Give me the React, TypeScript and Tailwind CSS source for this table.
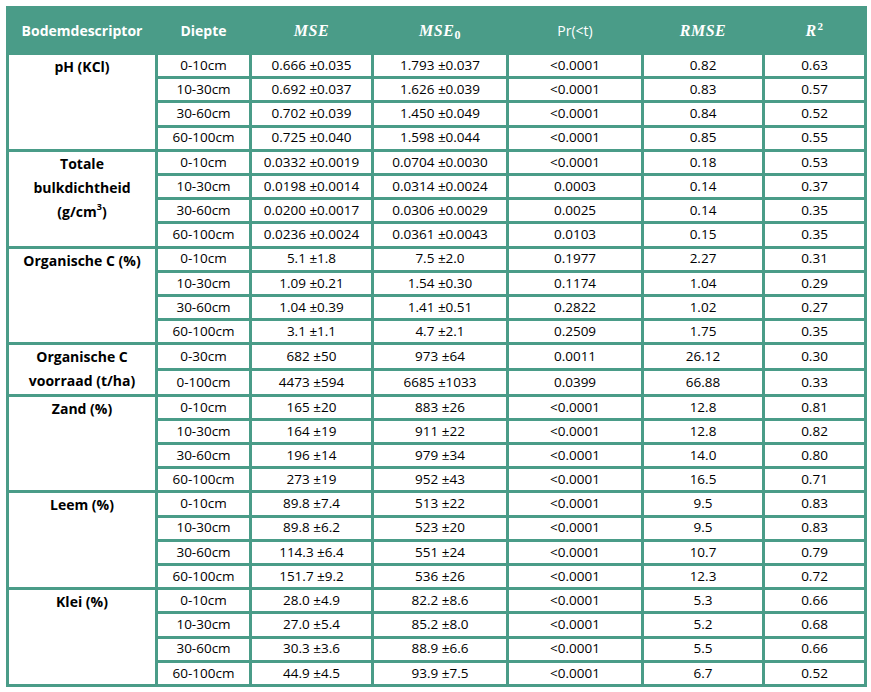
import React from "react";

type Row = [string, string, string, string, string, string];
type Group = { label: React.ReactNode; rows: Row[] };

const groups: Group[] = [
  {
    label: "pH (KCl)",
    rows: [
      ["0-10cm", "0.666 ±0.035", "1.793 ±0.037", "<0.0001", "0.82", "0.63"],
      ["10-30cm", "0.692 ±0.037", "1.626 ±0.039", "<0.0001", "0.83", "0.57"],
      ["30-60cm", "0.702 ±0.039", "1.450 ±0.049", "<0.0001", "0.84", "0.52"],
      ["60-100cm", "0.725 ±0.040", "1.598 ±0.044", "<0.0001", "0.85", "0.55"],
    ],
  },
  {
    label: (
      <>
        Totale
        <br />
        bulkdichtheid
        <br />
        (g/cm<span className="text-[9px] align-top relative top-[-5px]">3</span>)
      </>
    ),
    rows: [
      ["0-10cm", "0.0332 ±0.0019", "0.0704 ±0.0030", "<0.0001", "0.18", "0.53"],
      ["10-30cm", "0.0198 ±0.0014", "0.0314 ±0.0024", "0.0003", "0.14", "0.37"],
      ["30-60cm", "0.0200 ±0.0017", "0.0306 ±0.0029", "0.0025", "0.14", "0.35"],
      ["60-100cm", "0.0236 ±0.0024", "0.0361 ±0.0043", "0.0103", "0.15", "0.35"],
    ],
  },
  {
    label: "Organische C (%)",
    rows: [
      ["0-10cm", "5.1 ±1.8", "7.5 ±2.0", "0.1977", "2.27", "0.31"],
      ["10-30cm", "1.09 ±0.21", "1.54 ±0.30", "0.1174", "1.04", "0.29"],
      ["30-60cm", "1.04 ±0.39", "1.41 ±0.51", "0.2822", "1.02", "0.27"],
      ["60-100cm", "3.1 ±1.1", "4.7 ±2.1", "0.2509", "1.75", "0.35"],
    ],
  },
  {
    label: (
      <>
        Organische C
        <br />
        voorraad (t/ha)
      </>
    ),
    rows: [
      ["0-30cm", "682 ±50", "973 ±64", "0.0011", "26.12", "0.30"],
      ["0-100cm", "4473 ±594", "6685 ±1033", "0.0399", "66.88", "0.33"],
    ],
  },
  {
    label: "Zand (%)",
    rows: [
      ["0-10cm", "165 ±20", "883 ±26", "<0.0001", "12.8", "0.81"],
      ["10-30cm", "164 ±19", "911 ±22", "<0.0001", "12.8", "0.82"],
      ["30-60cm", "196 ±14", "979 ±34", "<0.0001", "14.0", "0.80"],
      ["60-100cm", "273 ±19", "952 ±43", "<0.0001", "16.5", "0.71"],
    ],
  },
  {
    label: "Leem (%)",
    rows: [
      ["0-10cm", "89.8 ±7.4", "513 ±22", "<0.0001", "9.5", "0.83"],
      ["10-30cm", "89.8 ±6.2", "523 ±20", "<0.0001", "9.5", "0.83"],
      ["30-60cm", "114.3 ±6.4", "551 ±24", "<0.0001", "10.7", "0.79"],
      ["60-100cm", "151.7 ±9.2", "536 ±26", "<0.0001", "12.3", "0.72"],
    ],
  },
  {
    label: "Klei (%)",
    rows: [
      ["0-10cm", "28.0 ±4.9", "82.2 ±8.6", "<0.0001", "5.3", "0.66"],
      ["10-30cm", "27.0 ±5.4", "85.2 ±8.0", "<0.0001", "5.2", "0.68"],
      ["30-60cm", "30.3 ±3.6", "88.9 ±6.6", "<0.0001", "5.5", "0.66"],
      ["60-100cm", "44.9 ±4.5", "93.9 ±7.5", "<0.0001", "6.7", "0.52"],
    ],
  },
];

export default function App() {
  const math = "font-['Liberation_Serif',serif] italic font-bold text-[16px] tracking-[0.5px]";
  return (
    <div className="w-[871px] h-[692px] bg-white font-['Open_Sans',sans-serif] text-black">
      <div className="pl-[6px] pt-[6px]">
        <table className="table-fixed border-collapse w-[858px]">
          <colgroup>
            <col className="w-[149px]" />
            <col className="w-[94px]" />
            <col className="w-[122px]" />
            <col className="w-[135px]" />
            <col className="w-[135px]" />
            <col className="w-[121px]" />
            <col className="w-[102px]" />
          </colgroup>
          <thead>
            <tr className="h-[46px] bg-[#4a9c88] text-white">
              <th className="border-[3px] border-[#4a9c88] text-[14px] font-bold">Bodemdescriptor</th>
              <th className="border-[3px] border-[#4a9c88] text-[14px] font-bold">Diepte</th>
              <th className={`border-[3px] border-[#4a9c88] ${math}`}>MSE</th>
              <th className={`border-[3px] border-[#4a9c88] ${math}`}>
                MSE<span className="text-[12px] not-italic font-bold align-baseline relative top-[3px]">0</span>
              </th>
              <th className="border-[3px] border-[#4a9c88] text-[14px] font-normal">Pr(&lt;t)</th>
              <th className={`border-[3px] border-[#4a9c88] ${math}`}>RMSE</th>
              <th className={`border-[3px] border-[#4a9c88] ${math}`}>
                R<span className="text-[11px] not-italic font-bold align-baseline relative top-[-6px] ml-[1px]">2</span>
              </th>
            </tr>
          </thead>
          <tbody>
            {groups.map((g, gi) =>
              g.rows.map((r, ri) => (
                <tr key={`${gi}-${ri}`} className="h-[24.2px]">
                  {ri === 0 && (
                    <td
                      rowSpan={g.rows.length}
                      className="border-[3px] border-[#4a9c88] align-top text-center font-bold text-[14px] leading-[24.2px] p-0"
                    >
                      {g.label}
                    </td>
                  )}
                  {r.map((c, ci) => (
                    <td
                      key={ci}
                      className="border-[3px] border-[#4a9c88] text-center text-[13.5px] leading-none p-0 align-middle"
                    >
                      {c}
                    </td>
                  ))}
                </tr>
              ))
            )}
          </tbody>
        </table>
      </div>
    </div>
  );
}
